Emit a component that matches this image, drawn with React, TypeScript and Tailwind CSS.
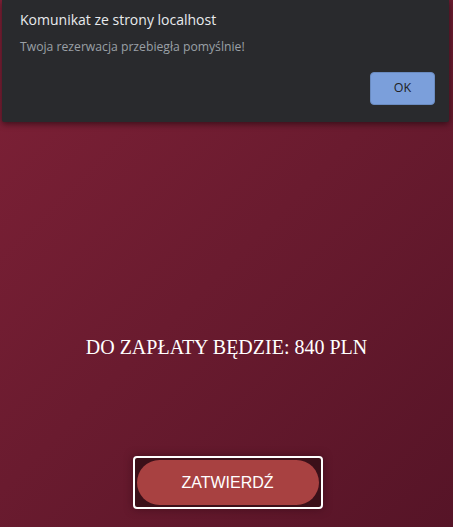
export default function App() {
  return (
    <div className="relative h-[527px] w-full overflow-hidden bg-[linear-gradient(135deg,#7f2137_0%,#6a1b2f_50%,#561427_100%)]">
      <div className="flex flex-col items-center pt-[334px]">
        <h2 className="text-[20px] leading-[27px] text-white font-['Liberation_Serif',serif]">
          DO ZAPŁATY BĘDZIE: 840 PLN
        </h2>
        <button className="mt-[95px] ml-[2px] h-[53px] w-[190px] rounded-[4px] border-2 border-white bg-[#3b1019] p-[2px] shadow-[0_0_8px_rgba(40,5,15,0.5)]">
          <span className="flex h-full w-full items-center justify-center rounded-full bg-[#a84141] text-[16px] text-white font-['Liberation_Sans',sans-serif]">
            ZATWIERDŹ
          </span>
        </button>
      </div>

      {/* alert przegladarki */}
      <div className="absolute left-[2px] top-0 h-[122px] w-[447px] rounded-b-[2px] bg-[#292a2d] shadow-[0_2px_6px_rgba(0,0,0,0.5)] font-['Open_Sans',sans-serif]">
        <div className="px-[18px] pt-[9px] text-[14px] text-[#e8eaed]">Komunikat ze strony localhost</div>
        <div className="px-[18px] pt-[8px] text-[12.2px] text-[#9aa0a6]">Twoja rezerwacja przebiegła pomyślnie!</div>
        <div className="flex justify-end pr-[14px] pt-[16px]">
          <button className="h-[33px] w-[65px] rounded-[4px] border border-[#6a8bc0] bg-[#7b9fdb] text-[12.5px] text-[#202124]">
            OK
          </button>
        </div>
      </div>
    </div>
  );
}
